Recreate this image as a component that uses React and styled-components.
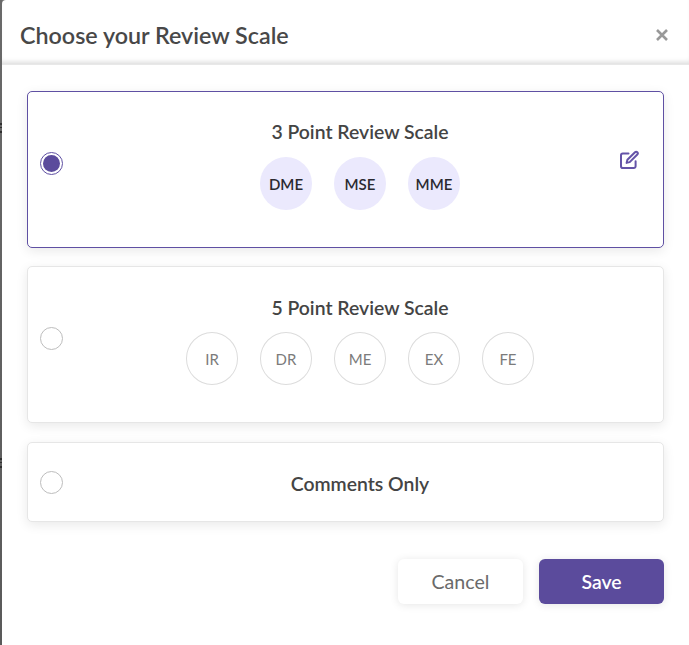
import React from 'react';
import styled, { createGlobalStyle } from 'styled-components';

const Global = createGlobalStyle`
  html, body { margin: 0; padding: 0; background: #5f5f5f; }
  * { box-sizing: border-box; }
`;
const Page = styled.div`
  width: 689px; height: 645px; padding-left: 2px; overflow: hidden;
  background:
    linear-gradient(#2f2f2f, #2f2f2f) 0 123px / 2px 2px no-repeat,
    linear-gradient(#2f2f2f, #2f2f2f) 0 127px / 2px 1px no-repeat,
    linear-gradient(#2f2f2f, #2f2f2f) 0 131px / 2px 2px no-repeat,
    linear-gradient(#2f2f2f, #2f2f2f) 0 458px / 2px 2px no-repeat,
    linear-gradient(#2f2f2f, #2f2f2f) 0 462px / 2px 1px no-repeat,
    linear-gradient(#2f2f2f, #2f2f2f) 0 466px / 2px 2px no-repeat,
    linear-gradient(#6a6a6a, #5a5a5a);
  font-family: Lato, "Liberation Sans", sans-serif;
`;
const Modal = styled.div`
  height: 645px; background: #fff; border-top-left-radius: 4px;
  display: flex; flex-direction: column;
`;
const Header = styled.header`
  height: 65px; flex: none; padding: 5px 20px 0 18px;
  display: flex; align-items: center; justify-content: space-between;
  border-bottom: 1px solid #e8e8e8;
  box-shadow: inset 0 -5px 5px -3px #dcdcdc;
`;
const Title = styled.h2`
  margin: 0; font-size: 23.3px; font-weight: 600; color: #484848; line-height: 30px;
`;
const Close = styled.button`
  border: 0; padding: 0; background: none; width: 14px; height: 14px; display: flex;
  svg { display: block; }
`;
const Body = styled.div`
  padding: 26px 25px 0; display: flex; flex-direction: column;
`;
const Card = styled.div`
  position: relative; height: ${p => p.$h}px; margin-bottom: ${p => p.$mb}px;
  border-radius: 5px; background: #fff;
  border: 1px solid ${p => (p.$active ? '#5f50a3' : '#e6e6e6')};
  box-shadow: 0 3px 12px rgba(0,0,0,.09);
  display: flex; flex-direction: column; align-items: center;
  padding-top: ${p => p.$pt}px; padding-left: 29px;
`;
const Radio = styled.span`
  position: absolute; left: 12px; top: ${p => p.$top}px; width: 23px; height: 23px; border-radius: 50%;
  border: 1px solid ${p => (p.$on ? '#5f50a3' : '#bdbdbd')};
  display: flex; align-items: center; justify-content: center;
  &::after {
    content: ''; width: 17px; height: 17px; border-radius: 50%;
    background: ${p => (p.$on ? '#5b4b9c' : 'transparent')};
  }
`;
const CardTitle = styled.div`
  font-size: 19.4px; font-weight: 600; color: #444; line-height: 22px; text-align: center;
`;
const Chips = styled.div`
  display: flex; gap: 21.4px; margin-top: ${p => p.$mt}px;
`;
const Chip = styled.div`
  width: 52.6px; height: 53px; border-radius: 50%; display: flex; align-items: center; justify-content: center;
  font-size: 15px; font-weight: ${p => (p.$on ? 600 : 400)};
  color: ${p => (p.$on ? '#2a2a30' : '#7b7b7b')};
  background: ${p => (p.$on ? '#ebe9fd' : '#fff')};
  border: ${p => (p.$on ? '0' : '1px solid #dcdcdc')};
`;
const Edit = styled.span`
  position: absolute; left: 591px; top: 58px; width: 20px; height: 20px; color: #6554a8;
  svg { display: block; }
`;
const Footer = styled.div`
  display: flex; justify-content: flex-end; gap: 16px; margin-top: 15px;
`;
const Btn = styled.button`
  width: 125px; height: 45px; border: 0; border-radius: 6px; font-family: inherit;
  font-size: ${p => (p.$primary ? 19.4 : 19.6)}px;
  font-weight: ${p => (p.$primary ? 600 : 400)};
  color: ${p => (p.$primary ? '#fff' : '#6a6a6a')};
  background: ${p => (p.$primary ? '#5b4b9c' : '#fff')};
  box-shadow: 0 1px 8px rgba(0,0,0,.1);
`;

export default function App() {
  return (
    <Page>
      <Global />
      <Modal>
        <Header>
          <Title>Choose your Review Scale</Title>
          <Close aria-label="Close">
            <svg width="14" height="14" viewBox="0 0 14 14"><path d="M2 2l10 10M12 2L2 12" stroke="#999" strokeWidth="2.6" /></svg>
          </Close>
        </Header>
        <Body>
          <Card $active $h={157} $mb={18} $pt={29}>
            <Radio $on $top={60} />
            <CardTitle>3 Point Review Scale</CardTitle>
            <Chips $mt={14}>
              <Chip $on>DME</Chip><Chip $on>MSE</Chip><Chip $on>MME</Chip>
            </Chips>
            <Edit>
              <svg width="20" height="20" viewBox="0 0 20 20" fill="none" stroke="currentColor" strokeWidth="2" strokeLinejoin="round" strokeLinecap="round">
                <path d="M9.5 3.5H3.8A1.8 1.8 0 0 0 2 5.3v11a1.8 1.8 0 0 0 1.8 1.8h11a1.8 1.8 0 0 0 1.8-1.8v-5" />
                <path d="M16 2.2a1.6 1.6 0 0 1 2.3 2.3l-7.6 7.6-3.1.8.8-3.1z" />
              </svg>
            </Edit>
          </Card>
          <Card $h={157} $mb={19} $pt={30}>
            <Radio $top={60} />
            <CardTitle>5 Point Review Scale</CardTitle>
            <Chips $mt={13}>
              <Chip>IR</Chip><Chip>DR</Chip><Chip>ME</Chip><Chip>EX</Chip><Chip>FE</Chip>
            </Chips>
          </Card>
          <Card $h={80} $mb={22} $pt={30}>
            <Radio $top={28} />
            <CardTitle>Comments Only</CardTitle>
          </Card>
          <Footer>
            <Btn>Cancel</Btn>
            <Btn $primary>Save</Btn>
          </Footer>
        </Body>
      </Modal>
    </Page>
  );
}
